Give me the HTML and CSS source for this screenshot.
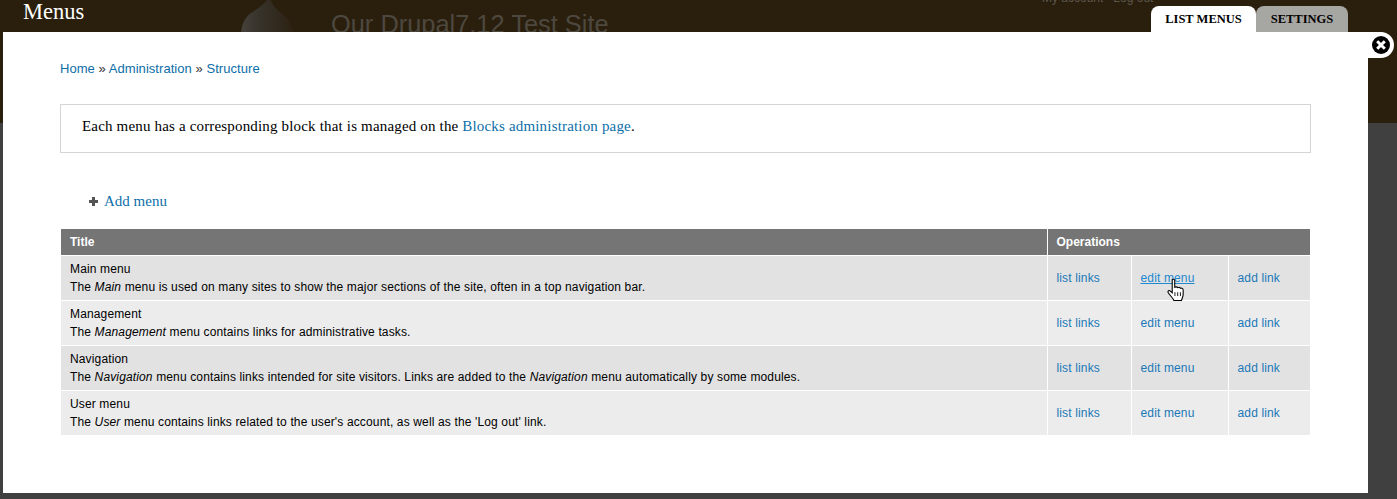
FILE: index.html
```html
<!DOCTYPE html>
<html lang="en">
<head>
<meta charset="utf-8">
<title>Menus</title>
<link rel="stylesheet" href="styles.css">
</head>
<body>
<header class="site-header">
  <svg class="site-logo" width="60" height="32" viewBox="0 0 60 32">
    <defs><linearGradient id="drop" x1="0" y1="0" x2="1" y2="0"><stop offset="0" stop-color="#45423b"/><stop offset=".35" stop-color="#37322a"/><stop offset="1" stop-color="#2c2212"/></linearGradient></defs>
    <path d="M33 -3C30 3 24 7 15 13C8 18 5 26 5 36H58C57 24 52 18 45 13C40 9 36 4 33 -3Z" fill="url(#drop)"/>
  </svg>
  <div class="site-name">Our Drupal7.12 Test Site</div>
  <div class="user-links">My account &nbsp; Log out</div>
</header>
<div class="overlay-title">Menus</div>
<nav class="overlay-tabs">
  <a class="tab tab-active" href="#">LIST MENUS</a>
  <a class="tab" href="#">SETTINGS</a>
</nav>
<main class="overlay">
  <div class="breadcrumb"><a href="#">Home</a> » <a href="#">Administration</a> » <a href="#">Structure</a></div>
  <div class="help">Each menu has a corresponding block that is managed on the <a href="#">Blocks administration page</a>.</div>
  <div class="actions"><span class="plus"></span><a href="#">Add menu</a></div>
  <table class="menus">
    <colgroup><col class="col-title"><col class="col-list"><col class="col-edit"><col class="col-add"></colgroup>
    <thead>
      <tr><th>Title</th><th colspan="3">Operations</th></tr>
    </thead>
    <tbody>
      <tr class="even"><td>Main menu<br>The <em>Main</em> menu is used on many sites to show the major sections of the site, often in a top navigation bar.</td><td><a href="#">list links</a></td><td><a class="hover" href="#">edit menu</a></td><td><a href="#">add link</a></td></tr>
      <tr class="odd"><td>Management<br>The <em>Management</em> menu contains links for administrative tasks.</td><td><a href="#">list links</a></td><td><a href="#">edit menu</a></td><td><a href="#">add link</a></td></tr>
      <tr class="even"><td>Navigation<br>The <em>Navigation</em> menu contains links intended for site visitors. Links are added to the <em>Navigation</em> menu automatically by some modules.</td><td><a href="#">list links</a></td><td><a href="#">edit menu</a></td><td><a href="#">add link</a></td></tr>
      <tr class="odd"><td>User menu<br>The <em>User</em> menu contains links related to the user's account, as well as the 'Log out' link.</td><td><a href="#">list links</a></td><td><a href="#">edit menu</a></td><td><a href="#">add link</a></td></tr>
    </tbody>
  </table>
</main>
<a class="close" href="#" aria-label="Close">
  <svg width="20" height="20" viewBox="0 0 20 20"><circle cx="10" cy="10" r="9" fill="#000"/><path d="M6.2 6.2L13.8 13.8M13.8 6.2L6.2 13.8" stroke="#fff" stroke-width="3"/></svg>
</a>
<svg class="cursor" width="19" height="23" viewBox="0 0 16 21"><path d="M5 1.5C6 .8 7.3 1 7.3 2.5V8.5C8.5 8 9.5 8 10 8.8C11 8.3 12 8.5 12.5 9.4C13.6 9 15 9.5 15 11V15C15 17 14 18.5 13.5 20.5H6.5C6 18.5 2 15 1.2 13C.8 11.8 2 11 3 11.7L5 13.5V2.5Z" fill="#fff" stroke="#000" stroke-width="1"/><path d="M7.5 13V16.5M10 13V16.5M12.5 13V16.5" stroke="#000" stroke-width=".8"/></svg>
</body>
</html>
```

FILE: styles.css
```css
html, body {
  margin: 0;
  padding: 0;
  height: 499px;
  overflow: hidden;
  background: #404040;
}
body {
  font-family: "Liberation Sans", Arial, sans-serif;
  font-size: 12px;
  color: #000;
}
a {
  color: #0074bd;
  text-decoration: none;
}
.site-header {
  height: 123px;
  background: #2a1f0d;
  position: relative;
  overflow: hidden;
}
.site-logo {
  position: absolute;
  left: 236px;
  top: 0;
}
.site-name {
  position: absolute;
  left: 331px;
  top: 9px;
  font-size: 25.4px;
  line-height: 30px;
  color: #4d483f;
}
.user-links {
  position: absolute;
  left: 1042px;
  top: -9px;
  font-size: 12px;
  line-height: 14px;
  color: #5b564c;
}
.overlay-title {
  position: absolute;
  left: 23px;
  top: 0;
  font-family: "Liberation Serif", serif;
  font-size: 22.5px;
  line-height: 23px;
  color: #fff;
}
.overlay-tabs {
  position: absolute;
  left: 1151px;
  top: 6px;
  display: flex;
}
.tab {
  width: 92px;
  height: 26px;
  text-align: center;
  font-family: "Liberation Serif", serif;
  font-size: 12.5px;
  font-weight: bold;
  line-height: 26px;
  color: #000;
  background: #a6a6a3;
  border-radius: 8px 8px 0 0;
}
.tab-active {
  width: 105px;
  background: #fff;
}
.overlay {
  position: absolute;
  left: 3px;
  top: 32px;
  width: 1365px;
  height: 461px;
  box-sizing: border-box;
  padding: 29px 57px 0;
  background: #fff;
}
.breadcrumb {
  line-height: 16px;
  font-size: 13px;
  letter-spacing: .05px;
  color: #333;
}
.breadcrumb a {
  color: #0d6ea8;
}
.help {
  margin-top: 27px;
  height: 49px;
  box-sizing: border-box;
  padding: 11px 21px 0;
  border: 1px solid #d5d5d5;
  font-family: "Liberation Serif", serif;
  font-size: 15px;
  letter-spacing: .17px;
  line-height: 20px;
}
.help a, .actions a {
  color: #0d6ea8;
}
.actions {
  margin-top: 38px;
  padding-left: 29px;
  display: flex;
  align-items: center;
  gap: 6px;
  height: 20px;
  font-family: "Liberation Serif", serif;
  font-size: 15px;
}
.plus {
  width: 9px;
  height: 9px;
  background:
    linear-gradient(#555, #555) center / 9px 3px no-repeat,
    linear-gradient(#555, #555) center / 3px 9px no-repeat;
}
.menus {
  margin: 18px 0 0 1px;
  width: 1249px;
  border-collapse: collapse;
  table-layout: fixed;
  font-size: 12px;
  line-height: 18px;
}
.col-title { width: 986px; }
.col-list { width: 84px; }
.col-edit { width: 97px; }
.col-add { width: 82px; }
.menus th {
  height: 26px;
  padding: 0 9px;
  background: #757575;
  color: #fff;
  text-align: left;
  font-weight: bold;
}
.menus td {
  height: 44px;
  padding: 0 9px;
  border-top: 1px solid #fff;
  border-left: 1px solid #fff;
  letter-spacing: .14px;
}
.menus th + th {
  border-left: 1px solid #fff;
}
.menus td:first-child {
  border-left: 0;
}
.menus td a {
  color: #1a78b8;
}
.menus .hover {
  color: #1e88d0;
  text-decoration: underline;
}
.even td { background: #e2e2e2; }
.odd td { background: #ececec; }
.close {
  position: absolute;
  left: 1368px;
  top: 32px;
  width: 26px;
  height: 26px;
  background: #fff;
  border-radius: 0 13px 13px 0;
  display: flex;
  align-items: center;
  justify-content: center;
}
.cursor {
  position: absolute;
  left: 1166px;
  top: 278px;
}
```
